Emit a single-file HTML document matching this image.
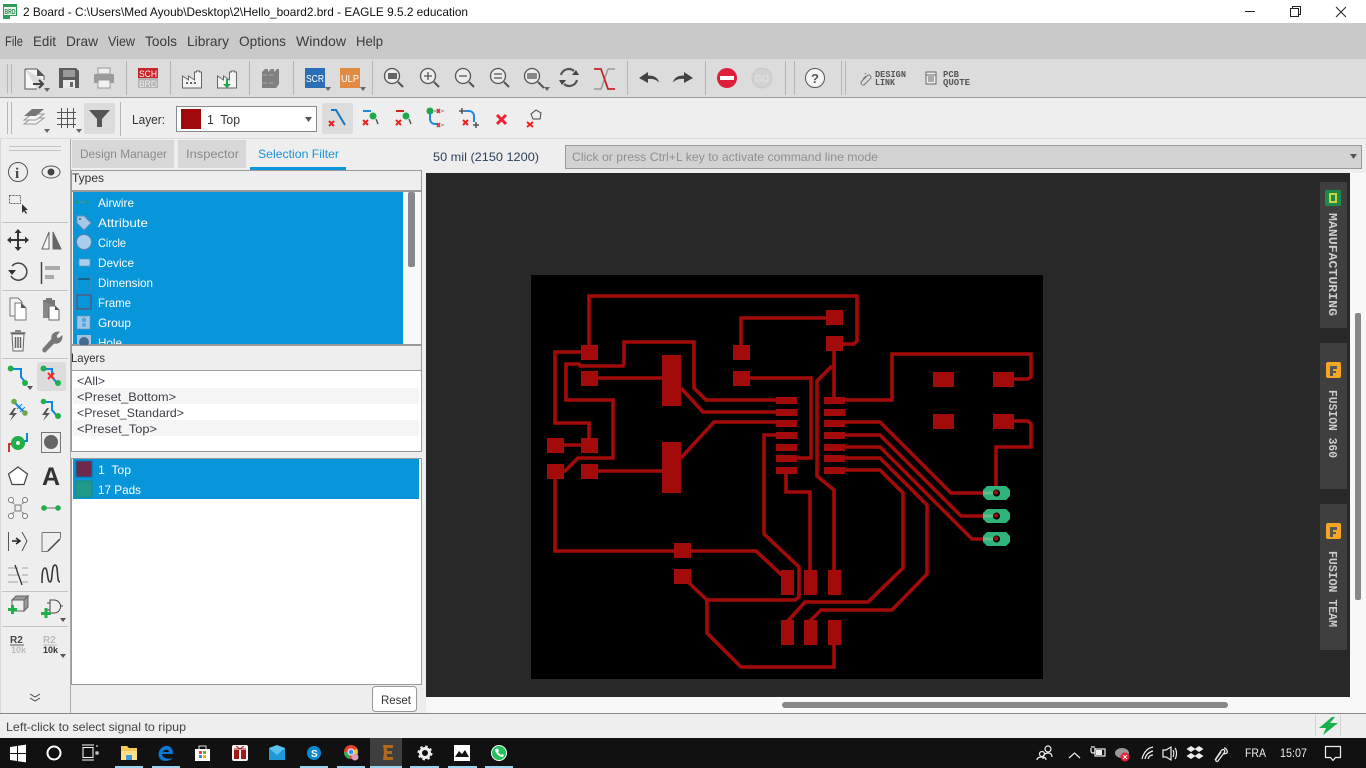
<!DOCTYPE html>
<html><head><meta charset="utf-8"><title>2 Board - EAGLE</title>
<style>
html,body{margin:0;padding:0;width:1366px;height:768px;overflow:hidden;background:#eee}
svg{display:block;position:absolute;left:0;top:0}
text{font-family:"Liberation Sans","DejaVu Sans",sans-serif;font-size:12px;fill:#333;white-space:pre}
.m{font-size:14px;fill:#3a3a3a}
.p{font-size:12px;fill:#fff}
.l{font-size:12px;fill:#3d3d48}
.t{font-size:12px;fill:#8a8a8a}
.b{font-family:"Liberation Mono",monospace;font-weight:bold;font-size:11px;fill:#555}
.s{font-family:"Liberation Mono",monospace;font-weight:bold;font-size:12px;fill:#ccc}
.w{font-size:12px;fill:#eee}
</style></head><body>
<svg width="1366" height="768" viewBox="0 0 1366 768" xmlns="http://www.w3.org/2000/svg">
<!-- base bars -->
<rect width="1366" height="768" fill="#eee"/>
<rect width="1366" height="23" fill="#fff"/>
<rect y="23" width="1366" height="36" fill="#c9c9c9"/>
<rect y="59" width="1366" height="38" fill="#dcdcdc"/>
<rect y="97" width="1366" height="1" fill="#9a9a9a"/>
<rect y="98" width="1366" height="41" fill="#eee"/>
<rect y="138" width="1366" height="1" fill="#dcdcdc"/>
<!-- title bar -->
<rect x="3" y="4" width="14" height="15" fill="#2f9a5a"/><rect x="4" y="7" width="12" height="8" fill="#e8f4ec"/><text x="4.500" y="14" textLength="11" lengthAdjust="spacingAndGlyphs" style="font-size:7px;fill:#2f8a50;font-weight:bold">BRD</text><rect x="10" y="16" width="7" height="3" fill="#fff"/>
<text x="23" y="16" font-size="12" textLength="445" lengthAdjust="spacingAndGlyphs" style="fill:#111">2 Board - C:\Users\Med Ayoub\Desktop\2\Hello_board2.brd - EAGLE 9.5.2 education</text>
<path d="M1245 11.5h10" stroke="#222" fill="none"/>
<path d="M1290.5 8.5h8v8h-8zM1292.5 8.5v-2h8v8h-2" stroke="#222" fill="none"/>
<path d="M1336 7l10 10M1346 7l-10 10" stroke="#222" fill="none"/>
<!-- menu -->
<text class="m" x="5" y="46" textLength="18" lengthAdjust="spacingAndGlyphs">File</text>
<text class="m" x="33" y="46" textLength="23" lengthAdjust="spacingAndGlyphs">Edit</text>
<text class="m" x="66" y="46" textLength="32" lengthAdjust="spacingAndGlyphs">Draw</text>
<text class="m" x="108" y="46" textLength="27" lengthAdjust="spacingAndGlyphs">View</text>
<text class="m" x="145" y="46" textLength="32" lengthAdjust="spacingAndGlyphs">Tools</text>
<text class="m" x="187" y="46" textLength="42" lengthAdjust="spacingAndGlyphs">Library</text>
<text class="m" x="239" y="46" textLength="47" lengthAdjust="spacingAndGlyphs">Options</text>
<text class="m" x="296" y="46" textLength="50" lengthAdjust="spacingAndGlyphs">Window</text>
<text class="m" x="356" y="46" textLength="27" lengthAdjust="spacingAndGlyphs">Help</text>
<!-- toolbar 1 separators -->
<g stroke="#b5b5b5" fill="none">
<path d="M7.5 64v29M11.5 64v29M126.5 61v34M170.5 61v34M249.5 61v34M293.5 61v34M372.5 61v34M627.5 61v34M705.5 61v34M785.5 61v34M794.5 61v34M841.5 61v34M845.5 61v34"/>
<path d="M7.5 102v32M11.5 102v32M120.5 102v34"/>
</g>
<!-- new doc -->
<path d="M25 69h12l7 7v4M25 69v20h12" fill="#f6f6f6" stroke="#555"/><path d="M37 69l7 7h-7z" fill="#555"/><path d="M33 84h9M39 80l4 4-4 4" stroke="#444" stroke-width="2" fill="none"/><path d="M44 88h6l-3 4z" fill="#666"/>
<!-- save -->
<path d="M59 68h17l3 3v17H59z" fill="#5c5c5c"/><rect x="63" y="70" width="12" height="7" fill="#9a9a9a"/><rect x="63" y="80" width="12" height="8" fill="#e8e8e8"/><rect x="70" y="82" width="3" height="5" fill="#666"/>
<!-- print -->
<rect x="98" y="68" width="12" height="6" fill="#eee" stroke="#999"/><rect x="94" y="74" width="20" height="9" rx="1" fill="#9a9a9a"/><rect x="98" y="80" width="12" height="8" fill="#f2f2f2" stroke="#999"/>
<!-- sch brd -->
<rect x="138" y="68" width="20" height="10" fill="#c4242a"/><rect x="138" y="78" width="20" height="10" fill="#b4b4b4"/>
<text x="139" y="77" textLength="18" lengthAdjust="spacingAndGlyphs" style="font-size:9px;fill:#fff">SCH</text>
<text x="139" y="87" textLength="18" lengthAdjust="spacingAndGlyphs" style="font-size:9px;fill:#eee">BRD</text>
<!-- factories -->
<path d="M182.500 88v-12l6 4v-4l6 4v-8h2v-1h3v1h2v16z" fill="#f4f4f4" stroke="#666"/><path d="M186 83h2M190 83h2M194 83h2" stroke="#333" stroke-width="1.500"/>
<path d="M217.500 88v-12l6 4v-4l6 4v-8h2v-1h3v1h2v16z" fill="#f4f4f4" stroke="#666"/><path d="M226 79v5h-3l4 4 4-4h-3v-5z" fill="#1fa84a"/>
<!-- books -->
<path d="M262 72l3-3h3v19h-6zM268 72l3-3h3v19h-6zM274 72l3-3h2v15l-3 4h-2z" fill="#808080"/><path d="M263 75h4M269 75h4M263 83h4M269 83h4" stroke="#b0b0b0"/>
<!-- scr ulp -->
<rect x="305" y="68" width="20" height="20" fill="#2a6fb5"/><text x="306" y="82" textLength="18" lengthAdjust="spacingAndGlyphs" style="font-size:10px;fill:#fff">SCR</text><path d="M325 87h6l-3 4z" fill="#666"/>
<rect x="340" y="68" width="20" height="20" fill="#e08a42"/><text x="341" y="82" textLength="18" lengthAdjust="spacingAndGlyphs" style="font-size:10px;fill:#fff">ULP</text><path d="M360 87h6l-3 4z" fill="#666"/>
<!-- zoom lenses -->
<g fill="#ececec" stroke="#555" stroke-width="1.300">
<circle cx="392" cy="76" r="7.500"/><path d="M398 82l5 5" stroke-width="2"/>
<circle cx="428" cy="76" r="7.500"/><path d="M434 82l5 5" stroke-width="2"/><path d="M424 76h8M428 72v8"/>
<circle cx="463" cy="76" r="7.500"/><path d="M469 82l5 5" stroke-width="2"/><path d="M459 76h8"/>
<circle cx="498" cy="76" r="7.500"/><path d="M504 82l5 5" stroke-width="2"/><path d="M494 74h8M494 78h8"/>
<circle cx="532" cy="76" r="7.500"/><path d="M538 82l6 6" stroke-width="2"/>
</g>
<rect x="527" y="73" width="10" height="6" rx="1" fill="#888"/><path d="M544 87h6l-3 4z" fill="#666"/><rect x="388" y="73" width="9" height="6" fill="#666"/>
<!-- refresh -->
<path d="M561 75a8 8 0 0 1 13-4M577 80a8 8 0 0 1-13 4" fill="none" stroke="#555" stroke-width="2.200"/><path d="M572 75h7l-3-5zM566 80h-7l3 5z" fill="#444"/>
<!-- ripup-like symbol -->
<path d="M594 89h7l7-20" fill="none" stroke="#999" stroke-width="1.500"/><path d="M594 69h7l7 20h7" fill="none" stroke="#c4242a" stroke-width="1.800"/><path d="M608 69h7" stroke="#999" stroke-width="1.500"/>
<!-- undo redo -->
<path d="M639 78l9-6v3.500c6 0 10 2 11 7-3-3-6-4-11-3.500V83z" fill="#444"/>
<path d="M693 78l-9-6v3.500c-6 0-10 2-11 7 3-3 6-4 11-3.500V83z" fill="#444"/>
<!-- stop go -->
<circle cx="727" cy="78" r="10" fill="#dd1f3c"/><rect x="720" y="76" width="14" height="4" fill="#fff"/>
<circle cx="762" cy="78" r="10" fill="#d2d2d2" stroke="#c8c8c8"/><text x="755" y="82" textLength="14" lengthAdjust="spacingAndGlyphs" style="font-size:10px;fill:#e6e6e6">GO</text>
<!-- help -->
<circle cx="815" cy="78" r="9.500" fill="#f6f6f6" stroke="#555"/><text x="811" y="83" style="font-size:13px;font-weight:bold;fill:#555">?</text>
<!-- design link / pcb quote -->
<path d="M861 82l7-7a2.500 2.500 0 0 1 3 3l-7 7a2.500 2.500 0 0 1-3-3zM865 74l1-1M863 79l3-3" fill="none" stroke="#777"/>
<text class="b" x="875" y="77" textLength="31" lengthAdjust="spacingAndGlyphs" style="font-size:9.500px">DESIGN</text><text class="b" x="875" y="85" textLength="20" lengthAdjust="spacingAndGlyphs" style="font-size:9.500px">LINK</text>
<rect x="926" y="72" width="10" height="12" fill="#eee" stroke="#666"/><path d="M926 75h10M928 77h6M928 79h6M928 81h6" stroke="#666"/>
<text class="b" x="943" y="77" textLength="16" lengthAdjust="spacingAndGlyphs" style="font-size:9.500px">PCB</text><text class="b" x="943" y="85" textLength="27" lengthAdjust="spacingAndGlyphs" style="font-size:9.500px">QUOTE</text>
<!-- toolbar 2 -->
<path d="M24 124l8-6h12l-8 6z" fill="#f4f4f4" stroke="#999"/><path d="M24 120l8-6h12l-8 6z" fill="#f4f4f4" stroke="#999"/><path d="M24 116l8-7h12l-8 7z" fill="#777"/><path d="M44 129h6l-3 4z" fill="#666"/>
<path d="M57 112.500h19M57 118.500h19M57 124.500h19M61.500 108v20M67.500 108v20M73.500 108v20" stroke="#555" fill="none"/><path d="M76 129h6l-3 4z" fill="#666"/>
<rect x="84" y="103" width="31" height="31" rx="2" fill="#dcdcdc"/><path d="M89 110h21l-8 9v8h-5v-8z" fill="#555"/>
<text x="132" y="124" textLength="33" lengthAdjust="spacingAndGlyphs" style="font-size:12.500px;fill:#333">Layer:</text>
<rect x="176.500" y="106.500" width="140" height="25" fill="#fff" stroke="#8a8a8a"/><rect x="181" y="109" width="20" height="20" fill="#a00a0a"/>
<text x="207" y="124" textLength="33" lengthAdjust="spacingAndGlyphs" style="font-size:12.500px;fill:#333">1  Top</text><path d="M305 117h7l-3.500 5z" fill="#555"/>
<rect x="322" y="103" width="31" height="31" rx="2" fill="#dcdcdc"/>
<path d="M331 110h5l9 15" fill="none" stroke="#1277c4" stroke-width="2"/><path d="M329 121l5 5M334 121l-5 5" stroke="#e22" stroke-width="2"/>
<path d="M363 111h8" stroke="#1c8ae0" stroke-width="2"/><circle cx="373" cy="116" r="3.500" fill="#1fa84a"/><path d="M376 119l2 5" stroke="#555" stroke-width="1.500"/><path d="M363 120l5 5M368 120l-5 5" stroke="#e22" stroke-width="2"/>
<path d="M396 111h8" stroke="#d02525" stroke-width="2"/><circle cx="406" cy="116" r="3.500" fill="#1fa84a"/><path d="M409 119l2 5" stroke="#555" stroke-width="1.500"/><path d="M396 120l5 5M401 120l-5 5" stroke="#e22" stroke-width="2"/>
<circle cx="430" cy="111" r="3.500" fill="#1fa84a"/><path d="M430 113v6a5 5 0 0 0 5 5h3" fill="none" stroke="#1c8ae0" stroke-width="2"/><path d="M434 111h3M441 111h3M441 125h3" stroke="#777"/><path d="M437 109l3 4M440 109l-3 4M437 123l3 4M440 123l-3 4" stroke="#e22" stroke-width="1.500"/>
<path d="M465 111h4a5 5 0 0 1 5 5v6" fill="none" stroke="#1c8ae0" stroke-width="2"/><path d="M459 111h6M462 108v6M473 125h6M476 122v6" stroke="#555" stroke-width="1.500"/><path d="M463 120l5 5M468 120l-5 5" stroke="#e22" stroke-width="2"/>
<path d="M497 115l9 9M506 115l-9 9" stroke="#ee2233" stroke-width="3"/>
<path d="M531 114l5-4 5 3-1 6h-7z" fill="none" stroke="#444"/><path d="M527 122l6 5M533 122l-6 5" stroke="#e22" stroke-width="2"/>
<!-- command row -->
<rect x="426" y="139" width="940" height="34" fill="#eee"/>
<text x="433" y="161" textLength="106" lengthAdjust="spacingAndGlyphs" style="font-size:12px;fill:#2e3f5a">50 mil (2150 1200)</text>
<rect x="565.500" y="145.500" width="796" height="23" fill="#d2d2d2" stroke="#9a9a9a"/>
<text x="572" y="161" textLength="306" lengthAdjust="spacingAndGlyphs" style="font-size:12px;fill:#8f8f8f">Click or press Ctrl+L key to activate command line mode</text>
<path d="M1350 154h7l-3.500 5z" fill="#555"/>
<!-- left toolbar -->
<rect y="139" width="70" height="574" fill="#eee"/><rect x="0" y="139" width="1" height="574" fill="#d8d8d8"/>
<g stroke="#c4c4c4"><path d="M9 146.500h52M9 150.500h52M2 222.500h66M2 290.500h66M2 358.500h66M2 591.500h66M2 626.500h66"/></g>
<circle cx="18" cy="172" r="9.500" fill="none" stroke="#555"/><text x="15" y="178" style="font-size:15px;font-weight:bold;fill:#444;font-family:'Liberation Serif',serif">i</text>
<ellipse cx="51" cy="172" rx="9" ry="6" fill="none" stroke="#555"/><circle cx="51" cy="172" r="3.500" fill="#444"/>
<rect x="9.500" y="195.500" width="11" height="8" fill="none" stroke="#666" stroke-dasharray="2 1"/><path d="M22 204l0 9 2-2 2 3 1-1-2-3 3 0z" fill="#333"/>
<path d="M18 231v18M9 240h18" stroke="#333" stroke-width="2"/><path d="M18 229l-3.500 4h7zM18 251l-3.500-4h7zM7 240l4-3.500v7zM29 240l-4-3.500v7z" fill="#333"/>
<path d="M49 232v17h-7z" fill="#f6f6f6" stroke="#666"/><path d="M53 232v17h8z" fill="#666" stroke="#666"/>
<path d="M12 266a8.500 8.500 0 1 1-1 10" fill="none" stroke="#444" stroke-width="1.500"/><path d="M8 270h8l-4 5z" fill="#333"/>
<path d="M41.500 262v22" stroke="#444" stroke-width="1.500"/><rect x="45" y="266" width="15" height="4" fill="#aaa"/><rect x="45" y="275" width="9" height="4" fill="#aaa"/>
<path d="M10 298h8l4 4v14H10z" fill="#f4f4f4" stroke="#777"/><path d="M15 303h6l5 5v12H15z" fill="#fff" stroke="#777"/><path d="M21 303l5 5h-5z" fill="#555"/>
<path d="M43 300h12v6H43z" fill="#777"/><path d="M46 298h6v3h-6z" fill="#777"/><path d="M43 301v17h8v-12h4" fill="#888"/><path d="M49 306h6l4 4v10H49z" fill="#fff" stroke="#666"/><path d="M55 306l4 4h-4z" fill="#555"/>
<path d="M12 334h12l-1 17H13z" fill="#f4f4f4" stroke="#666"/><path d="M10.500 333h15M15 331h6" stroke="#666" stroke-width="1.500"/><path d="M15.500 337v11M18 337v11M20.500 337v11" stroke="#666" stroke-width="1.500"/>
<path d="M43 349l9-10c-1-4 2-7 7-7l-3 4 2 3 4-3c0 5-3 8-8 7l-9 9a2 2 0 0 1-2-3z" fill="#777" stroke="#777"/>
<path d="M11 369h10v8l5 6" fill="none" stroke="#1186e0" stroke-width="2"/><circle cx="10.700" cy="368.500" r="3" fill="#1fb04a"/><circle cx="25" cy="383" r="3" fill="#1fb04a"/><path d="M27 386h6l-3 4z" fill="#555"/>
<rect x="37" y="362" width="29" height="29" rx="2" fill="#dcdcdc"/>
<path d="M44 369h8v8l5 6" fill="none" stroke="#1186e0" stroke-width="2"/><circle cx="43.500" cy="368.500" r="3" fill="#1fb04a"/><circle cx="58" cy="383" r="3" fill="#1fb04a"/><path d="M48 373l6 6M54 373l-6 6" stroke="#f22" stroke-width="2"/>
<path d="M15 403l9 9" stroke="#1186e0" stroke-width="2"/><circle cx="14" cy="401.500" r="2.800" fill="#6fa84a"/><circle cx="25" cy="413" r="2.800" fill="#6fa84a"/><path d="M17 409l5-5M20 412l5-5" stroke="#1186e0"/><path d="M14 408l-5 7h4l-3 6 7-8h-4l3-5z" fill="#555"/>
<path d="M44 402h8v8l5 6" fill="none" stroke="#1186e0" stroke-width="2"/><circle cx="43.500" cy="401.500" r="2.800" fill="#1fb04a"/><circle cx="58" cy="416" r="3" fill="#1fb04a"/><path d="M47 408l-5 7h4l-3 6 7-8h-4l3-5z" fill="#555"/>
<path d="M27 433v8h-4" fill="none" stroke="#1186e0" stroke-width="2"/><path d="M9 452v-8h3" fill="none" stroke="#c33" stroke-width="2"/><circle cx="18" cy="443" r="7" fill="#1fb04a"/><circle cx="18" cy="443" r="2" fill="#eee"/>
<rect x="41.500" y="432.500" width="19" height="20" fill="#eee" stroke="#777"/><circle cx="51" cy="442" r="7" fill="#666"/>
<path d="M18 467l9.500 7-3.500 10.500H12L8.500 474z" fill="#fff" stroke="#444" stroke-width="1.200"/>
<text x="42" y="485" style="font-size:25px;font-weight:bold;fill:#333">A</text>
<rect x="15" y="505" width="6" height="6" fill="none" stroke="#777"/><path d="M14 504l-3-3M22 504l3-3M14 512l-3 3M22 512l3 3" stroke="#777"/><circle cx="11" cy="500" r="2.500" fill="#fff" stroke="#777"/><circle cx="25" cy="500" r="2.500" fill="#fff" stroke="#777"/><circle cx="11" cy="516" r="2.500" fill="#fff" stroke="#777"/><circle cx="25" cy="516" r="2.500" fill="#fff" stroke="#777"/>
<path d="M44 508h14" stroke="#aaa" stroke-width="2"/><circle cx="44" cy="508" r="2.800" fill="#1fb04a"/><circle cx="58" cy="508" r="2.800" fill="#1fb04a"/>
<path d="M8.500 532v19" stroke="#555"/><path d="M12 541h7M16 538l4 3-4 3" stroke="#222" stroke-width="1.500" fill="none"/><path d="M22 532l5 9-5 10" stroke="#555" fill="none"/>
<path d="M48 551l12-12" stroke="#444" stroke-width="1.500"/><path d="M42 532.500h18.500v6M42 532.500v19h6" fill="none" stroke="#777"/>
<path d="M8 568h10M8 575h10M8 582h10M22 568h6M22 575h6M22 582h6" stroke="#bbb" stroke-width="1.500"/><path d="M15 565l7 20" stroke="#333" stroke-width="1.300"/>
<path d="M42 584c0-6 0-15 3-15s2 14 5 14 1-17 5-17 1 17 5 17" fill="none" stroke="#333" stroke-width="1.500" transform="translate(0 -1)"/>
<path d="M12 600l4-4h12l-4 4zM24 600l4-4v11l-4 4z" fill="#999" stroke="#666"/><rect x="12" y="600" width="12" height="11" fill="#eee" stroke="#666"/><rect x="8" y="608" width="9" height="3" fill="#1fb04a"/><rect x="11" y="605" width="3" height="9" fill="#1fb04a"/>
<path d="M50 600h4a6 6 0 0 1 0 13h-4zM60 606h3M50 603h-3M50 610h-3" fill="none" stroke="#444"/><rect x="41" y="612" width="10" height="3" fill="#1fb04a"/><rect x="44.500" y="608" width="3" height="10" fill="#1fb04a"/><path d="M60 618h6l-3 4z" fill="#555"/>
<text x="10" y="643" style="font-size:10px;font-weight:bold;fill:#444">R2</text><path d="M10 645h14" stroke="#555"/><text x="11" y="653" style="font-size:9px;font-weight:bold;fill:#bbb">10k</text>
<text x="43" y="643" style="font-size:10px;font-weight:bold;fill:#bbb">R2</text><path d="M43 645h14" stroke="#bbb"/><text x="43" y="653" style="font-size:9px;font-weight:bold;fill:#333">10k</text><path d="M60 654h6l-3 4z" fill="#555"/>
<path d="M30 694l5 3 5-3M30 698l5 3 5-3" fill="none" stroke="#444"/>
<!-- panel -->
<rect x="70" y="139" width="356" height="574" fill="#eee"/><rect x="70" y="139" width="1" height="574" fill="#aaa"/>
<rect x="72" y="140" width="102" height="28" fill="#d8d8d8"/><rect x="178" y="140" width="68" height="28" fill="#d8d8d8"/>
<rect x="250" y="167" width="96" height="3" fill="#0a96d8"/>
<text class="t" x="80" y="158" textLength="87" lengthAdjust="spacingAndGlyphs">Design Manager</text>
<text class="t" x="186" y="158" textLength="53" lengthAdjust="spacingAndGlyphs">Inspector</text>
<text x="258" y="158" textLength="81" lengthAdjust="spacingAndGlyphs" style="font-size:12px;fill:#1a94d4">Selection Filter</text>
<rect x="71.500" y="170.500" width="350" height="20" fill="#eee" stroke="#9a9a9a"/>
<text class="l" x="72" y="182" textLength="32" lengthAdjust="spacingAndGlyphs" style="fill:#333">Types</text>
<rect x="71.500" y="191.500" width="350" height="153" fill="#f8f8f8" stroke="#9a9a9a"/>
<rect x="73" y="192" width="330" height="152" fill="#0896da"/>
<rect x="408" y="192" width="7" height="75" rx="2" fill="#888"/>
<text class="p" x="98" y="207" textLength="36" lengthAdjust="spacingAndGlyphs">Airwire</text>
<text class="p" x="98" y="227" textLength="50" lengthAdjust="spacingAndGlyphs">Attribute</text>
<text class="p" x="98" y="247" textLength="28" lengthAdjust="spacingAndGlyphs">Circle</text>
<text class="p" x="98" y="267" textLength="36" lengthAdjust="spacingAndGlyphs">Device</text>
<text class="p" x="98" y="287" textLength="55" lengthAdjust="spacingAndGlyphs">Dimension</text>
<text class="p" x="98" y="307" textLength="33" lengthAdjust="spacingAndGlyphs">Frame</text>
<text class="p" x="98" y="327" textLength="33" lengthAdjust="spacingAndGlyphs">Group</text>
<path d="M76 202h12" stroke="#6a8a9a"/><circle cx="77" cy="202" r="1.500" fill="#14a06e"/><circle cx="87" cy="202" r="1.500" fill="#14a06e"/>
<path d="M77 216l7 0 7 7-7 7-7-7z" fill="#a5c8e6" stroke="#6b8fb0"/><circle cx="80" cy="219" r="1" fill="#456"/>
<circle cx="84" cy="242" r="7.500" fill="#a9cdec" stroke="#5b7fa8"/>
<rect x="79" y="259" width="11" height="7" fill="#a9cdec" stroke="#6b8fb0" stroke-dasharray="2 1"/>
<path d="M77 275v15M91 275v15" stroke="#5b7fa8"/><path d="M78 279h12" stroke="#234"/>
<rect x="77" y="295" width="14" height="14" fill="#0896da" stroke="#3f6a95" stroke-width="2"/>
<rect x="77" y="316" width="13" height="13" fill="#9ec8e8" stroke="#6b8fb0" stroke-dasharray="2 1"/><circle cx="84" cy="320" r="2.500" fill="#5aa7dc"/><circle cx="84" cy="325" r="2" fill="#5aa7dc"/>
<rect x="77" y="335" width="14" height="9" fill="#a5c2dc"/><circle cx="84" cy="342" r="5" fill="#456c90"/>
<svg x="73" y="336" width="330" height="8"><text class="p" x="25" y="11" textLength="24" lengthAdjust="spacingAndGlyphs">Hole</text></svg>
<rect x="71.500" y="345.500" width="350" height="25" fill="#eee" stroke="#9a9a9a"/>
<text class="l" x="71" y="362" textLength="34" lengthAdjust="spacingAndGlyphs" style="fill:#333">Layers</text>
<rect x="71.500" y="370.500" width="350" height="81" fill="#fff" stroke="#9a9a9a"/>
<rect x="73" y="388" width="346" height="16" fill="#f5f5f5"/><rect x="73" y="420" width="346" height="16" fill="#f5f5f5"/>
<text class="l" x="77" y="385" textLength="28" lengthAdjust="spacingAndGlyphs">&lt;All&gt;</text>
<text class="l" x="77" y="401" textLength="99" lengthAdjust="spacingAndGlyphs">&lt;Preset_Bottom&gt;</text>
<text class="l" x="77" y="417" textLength="107" lengthAdjust="spacingAndGlyphs">&lt;Preset_Standard&gt;</text>
<text class="l" x="77" y="433" textLength="80" lengthAdjust="spacingAndGlyphs">&lt;Preset_Top&gt;</text>
<rect x="71.500" y="458.500" width="350" height="226" fill="#fff" stroke="#9a9a9a"/>
<rect x="73" y="459" width="346" height="40" fill="#0896da"/>
<rect x="76" y="461" width="16" height="16" fill="#6e2a4a" stroke="#0c6fa8"/><rect x="76" y="481" width="16" height="16" fill="#1f9a8a" stroke="#1a8f7a"/>
<text class="p" x="98" y="474" textLength="33" lengthAdjust="spacingAndGlyphs">1  Top</text>
<text class="p" x="98" y="494" textLength="43" lengthAdjust="spacingAndGlyphs">17 Pads</text>
<rect x="372.500" y="686.500" width="44" height="25" rx="3" fill="#fff" stroke="#999"/>
<text x="381" y="704" textLength="30" lengthAdjust="spacingAndGlyphs" style="font-size:12px;fill:#333">Reset</text>
<!-- canvas -->
<rect x="426" y="173" width="940" height="540" fill="#f8f8f8"/>
<rect x="426" y="173" width="924" height="524" fill="#282828"/>
<rect x="1355" y="313" width="6" height="287" rx="2" fill="#888"/>
<rect x="782" y="702" width="446" height="6" rx="3" fill="#888"/>
<rect x="531" y="275" width="512" height="404" fill="#000"/>
<!-- traces -->
<g fill="none" stroke="#a30b0b" stroke-width="3.600">
<path d="M589 352V296H857V341L854 344H835"/>
<path d="M589 352H555V423H589V445"/>
<path d="M556 445H589"/>
<path d="M564 472L578 458H613V400H566V364H579L580 366H623L624 364V342H694V388L706 400H786"/>
<path d="M598 378H670"/>
<path d="M598 471H670"/>
<path d="M681 388L703 412H786"/>
<path d="M681 458L714 422H786"/>
<path d="M741 352V318H835"/>
<path d="M741 378H811V458H786"/>
<path d="M776 435H764V534L799 567V597L795 600H707L688 582M707 600V633L741 667H834V640"/>
<path d="M786 470V492H810V575"/>
<path d="M834 344V400"/>
<path d="M832 366L817 381V476L834 490V575"/>
<path d="M835 400H892V354H1031V377L1028 379H1005"/>
<path d="M1005 421H1028L1031 424V447H996V493"/>
<path d="M835 422H880L951 493H996"/>
<path d="M835 435H880L961 516H996"/>
<path d="M835 447H880L972 539H996"/>
<path d="M835 458H880L927 505V574L892 610H821L809 622"/>
<path d="M835 470H880L903 493V568L868 602H805L787 622"/>
<path d="M555 471V551H756L785 578"/>
</g>
<!-- pads -->
<g fill="#a30b0b">
<rect x="581" y="345" width="17" height="15"/><rect x="581" y="371" width="17" height="15"/>
<rect x="733" y="345" width="17" height="15"/><rect x="733" y="371" width="17" height="15"/>
<rect x="662" y="355" width="19" height="51"/><rect x="662" y="442" width="19" height="51"/>
<rect x="547" y="438" width="17" height="15"/><rect x="547" y="464" width="17" height="15"/>
<rect x="581" y="438" width="17" height="15"/><rect x="581" y="464" width="17" height="15"/>
<rect x="776" y="397" width="21" height="7"/><rect x="776" y="409" width="21" height="7"/><rect x="776" y="420" width="21" height="7"/><rect x="776" y="432" width="21" height="7"/><rect x="776" y="444" width="21" height="7"/><rect x="776" y="455" width="21" height="7"/><rect x="776" y="467" width="21" height="7"/>
<rect x="824" y="397" width="21" height="7"/><rect x="824" y="409" width="21" height="7"/><rect x="824" y="420" width="21" height="7"/><rect x="824" y="432" width="21" height="7"/><rect x="824" y="444" width="21" height="7"/><rect x="824" y="455" width="21" height="7"/><rect x="824" y="467" width="21" height="7"/>
<rect x="826" y="310" width="17" height="15"/><rect x="826" y="336" width="17" height="15"/>
<rect x="933" y="372" width="21" height="15"/><rect x="933" y="414" width="21" height="15"/><rect x="993" y="372" width="21" height="15"/><rect x="993" y="414" width="21" height="15"/>
<rect x="674" y="543" width="17" height="15"/><rect x="674" y="569" width="17" height="15"/>
<rect x="781" y="570" width="13" height="25"/><rect x="804" y="570" width="13" height="25"/><rect x="828" y="570" width="13" height="25"/>
<rect x="781" y="620" width="13" height="25"/><rect x="804" y="620" width="13" height="25"/><rect x="828" y="620" width="13" height="25"/>
</g>
<g>
<path d="M987 486H1006L1010 490V496L1006 500H987L983 496V490Z" fill="#2fb37a"/><path d="M983 493H996" stroke="#5fbf8a" stroke-width="3"/><circle cx="996.500" cy="493" r="3.500" fill="#000"/><circle cx="996" cy="492.500" r="2.200" fill="#a30b0b"/>
<path d="M987 509H1006L1010 513V519L1006 523H987L983 519V513Z" fill="#2fb37a"/><path d="M983 516H996" stroke="#5fbf8a" stroke-width="3"/><circle cx="996.500" cy="516" r="3.500" fill="#000"/><circle cx="996" cy="515.500" r="2.200" fill="#a30b0b"/>
<path d="M987 532H1006L1010 536V542L1006 546H987L983 542V536Z" fill="#2fb37a"/><path d="M983 539H996" stroke="#5fbf8a" stroke-width="3"/><circle cx="996.500" cy="539" r="3.500" fill="#000"/><circle cx="996" cy="538.500" r="2.200" fill="#a30b0b"/>
</g>
<!-- side tabs -->
<rect x="1320" y="182" width="27" height="146" fill="#3f3f3f"/><rect x="1320" y="343" width="27" height="146" fill="#3f3f3f"/><rect x="1320" y="504" width="27" height="146" fill="#3f3f3f"/>
<rect x="1325" y="190" width="16" height="16" rx="1" fill="#1e8a4a"/><rect x="1329" y="193" width="8" height="10" fill="#c8d23a"/><rect x="1331" y="195" width="4" height="6" fill="#1e8a4a"/>
<rect x="1326" y="362" width="15" height="16" rx="2" fill="#f5a623"/><path d="M1330 366h7v3h-4v2h3v2h-3v3h-3z" fill="#555"/>
<rect x="1326" y="523" width="15" height="16" rx="2" fill="#f5a623"/><path d="M1330 527h7v3h-4v2h3v2h-3v3h-3z" fill="#555"/>
<text class="s" transform="translate(1329 213) rotate(90)" textLength="103" lengthAdjust="spacingAndGlyphs">MANUFACTURING</text>
<text class="s" transform="translate(1329 390) rotate(90)" textLength="68" lengthAdjust="spacingAndGlyphs">FUSION 360</text>
<text class="s" transform="translate(1329 551) rotate(90)" textLength="76" lengthAdjust="spacingAndGlyphs">FUSION TEAM</text>
<!-- status bar -->
<rect y="713" width="1366" height="25" fill="#eee"/><rect y="713" width="1366" height="1" fill="#888"/>
<text x="6" y="731" textLength="180" lengthAdjust="spacingAndGlyphs" style="font-size:12px;fill:#444">Left-click to select signal to ripup</text>
<path d="M1315.500 715v21M1340.500 715v21" stroke="#d4d4d4"/>
<path d="M1332 717l-13 11h7l-3 7 15-12h-8l5-6z" fill="#16b04c"/>
<!-- taskbar -->
<rect y="738" width="1366" height="30" fill="#111"/>
<path d="M10 747l7-1v7h-7zM18 745.800l8-1.200v8.400h-8zM10 754h7v7l-7-1zM18 754h8v8.400l-8-1.200z" fill="#fff"/>
<circle cx="54" cy="753" r="6.500" fill="none" stroke="#fff" stroke-width="2"/>
<path d="M83 747.500h10v10H83zM82 745h12M82 760h12" stroke="#fff" fill="none"/><path d="M96 746h2M96 752h2v2h-2z" stroke="#fff" fill="none"/>
<path d="M121 746h6l2 2h8v12h-16z" fill="#f4c95a"/><rect x="121" y="751" width="16" height="9" fill="#ffe08a"/><rect x="126" y="755" width="6" height="5" fill="#3a9bd8"/>
<path d="M173 758c-2 3-12 5-14-1-2-8 5-12 9-11 4 1 5 4 5 8h-11c0 4 7 6 11 4zm-4-6c0-3-5-3-6 0z" fill="#0a78d4"/>
<rect x="195" y="749" width="15" height="12" fill="#fff"/><path d="M199 749v-3h7v3" stroke="#ddd" fill="none"/><rect x="199" y="751" width="3" height="3" fill="#e8452c"/><rect x="203" y="751" width="3" height="3" fill="#6ab42d"/><rect x="199" y="755" width="3" height="3" fill="#2a90d8"/><rect x="203" y="755" width="3" height="3" fill="#f4b400"/>
<rect x="232" y="745" width="16" height="16" rx="2" fill="#f4f4f4"/><rect x="234" y="750" width="12" height="9" fill="#a01a1a"/><rect x="239" y="747" width="2" height="12" fill="#f4f4f4"/><path d="M234 749h12M236 746l4 3 4-3" stroke="#a01a1a" fill="none"/>
<rect x="269" y="748" width="16" height="12" fill="#1f9ad8"/><path d="M269 748l8 7 8-7-8-3z" fill="#5cc2ee"/>
<circle cx="314" cy="753" r="7" fill="#0a8ad4"/><text x="311" y="757" style="font-size:10px;font-weight:bold;fill:#fff">S</text>
<circle cx="351" cy="752" r="7" fill="#e2452c"/><path d="M351 752l6-3.500a7 7 0 0 1-4 10z" fill="#f4c20d"/><path d="M351 752l-2 7a7 7 0 0 1-5-7z" fill="#34a853"/><circle cx="351" cy="752" r="3" fill="#4285f4" stroke="#fff"/><circle cx="355" cy="757" r="3.500" fill="#d8a0b0"/>
<rect x="370" y="738" width="32" height="30" fill="#3f3f3f"/>
<path d="M383 745h10v3h-6v3h5v3h-5v3h6v3h-10l1-8z" fill="#b06a1e"/>
<circle cx="425" cy="753" r="4.500" fill="none" stroke="#eee" stroke-width="3"/><circle cx="425" cy="753" r="6.500" fill="none" stroke="#eee" stroke-width="2" stroke-dasharray="2.500 2.600"/>
<rect x="454" y="745" width="16" height="16" fill="#fff"/><path d="M455 757l4-6 3 3 3-4 4 7z" fill="#111"/>
<circle cx="499" cy="753" r="7.500" fill="#22c15e" stroke="#fff"/><path d="M495 749c0 4 4 8 8 8l1-2-2-1-1 1c-1-.500-2.500-2-3-3l1-1-1-2.500z" fill="#fff"/>
<g fill="#9ad4f0"><rect x="115" y="766" width="28" height="2"/><rect x="152" y="766" width="28" height="2"/><rect x="300" y="766" width="28" height="2"/><rect x="337" y="766" width="28" height="2"/><rect x="370" y="766" width="32" height="2"/><rect x="410" y="766" width="29" height="2"/><rect x="448" y="766" width="29" height="2"/><rect x="485" y="766" width="28" height="2"/></g>
<!-- tray -->
<g fill="none" stroke="#eee" stroke-width="1.200">
<circle cx="1048" cy="749" r="3"/><path d="M1043 759c0-4 2-6 5-6s4 2 4 4"/><circle cx="1042" cy="754" r="2.500"/><path d="M1037 760c0-2 2-3 5-3s4 1 4 3"/>
<path d="M1069 758l5.500-5 5.500 5"/>
<rect x="1095" y="749" width="10" height="7"/><path d="M1091 748v3a2 2 0 0 0 4 0v-3M1092 746v2M1094 746v2"/>
<path d="M1142 759c2-8 6-11 11-12M1145 759c1-5 4-7 8-8M1148 759c.500-2 2-4 5-4"/>
<path d="M1163 750h3l5-3v13l-5-3h-3zM1173 750c1 2 1 5 0 7M1175 748c2 3 2 8 0 11"/>
<path d="M1215 760l6-9c2-3 5-1 3 2l-6 8c-1 1-3 0-2-2l5-7M1224 748c2 0 4 3 3 5l-3 1"/>
<path d="M1325.500 746.500h15v11h-5l-2.500 3-2.500-3h-5z"/>
</g>
<rect x="1096" y="750" width="6" height="5" fill="#eee"/>
<ellipse cx="1122" cy="753" rx="7" ry="5" fill="#9a9a9a"/><circle cx="1125" cy="757" r="4.500" fill="#e81c34"/><path d="M1123 755l4 4M1127 755l-4 4" stroke="#fff"/>
<path d="M1191 746l4.500 3-4.500 3-4.500-3zM1199 746l4.500 3-4.500 3-4.500-3zM1191 753l4.500 3-4.500 3-4.500-3zM1199 753l4.500 3-4.500 3-4.500-3z" fill="#eee"/>
<text class="w" x="1245" y="757" textLength="21" lengthAdjust="spacingAndGlyphs">FRA</text>
<text class="w" x="1280" y="757" textLength="27" lengthAdjust="spacingAndGlyphs">15:07</text>
</svg>
</body></html>
